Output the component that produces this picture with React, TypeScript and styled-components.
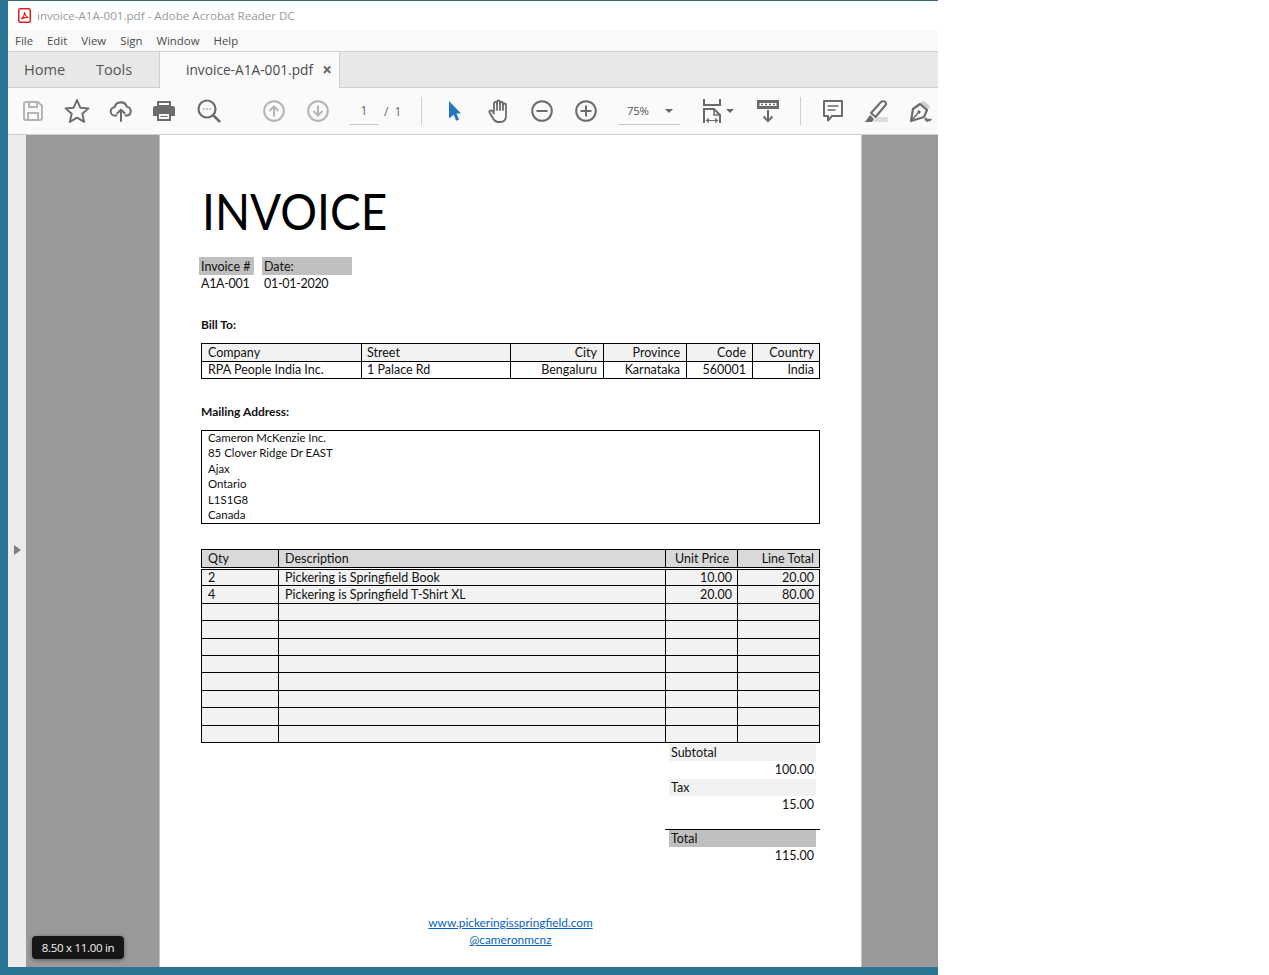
import React from "react";
import styled, { createGlobalStyle } from "styled-components";

const GlobalStyle = createGlobalStyle`
  html, body {
    margin: 0;
    padding: 0;
    background: #fff;
    overflow: hidden;
  }
  * { box-sizing: border-box; }
`;

const uiFont = `"Open Sans", "Noto Sans", sans-serif`;
const docFont = `"Lato", "Open Sans", sans-serif`;

const Desktop = styled.div`
  width: 938px;
  height: 975px;
  padding: 0 0 8px 8px;
  background: #2b7594;
  border-top: 1px solid #3a6b7d;
`;

const AppWindow = styled.div`
  height: 100%;
  display: flex;
  flex-direction: column;
  background: #fff;
  font-family: ${uiFont};
  overflow: hidden;
`;

const TitleBar = styled.div`
  height: 30px;
  flex: none;
  display: flex;
  align-items: center;
  gap: 6px;
  padding: 0 0 2px 10px;
  background: #fff;
  color: #999;
  font-size: 11.6px;
`;

const MenuBar = styled.div`
  height: 21px;
  flex: none;
  display: flex;
  align-items: center;
  gap: 14px;
  padding: 0 0 2px 7px;
  background: #f9f9f9;
  border-bottom: 1px solid #cfcfcf;
  color: #4b4b4b;
  font-size: 11.4px;
`;

const TabBar = styled.div`
  height: 36px;
  flex: none;
  display: flex;
  background: #e8e8e8;
  border-bottom: 1px solid #cfcfcf;
`;

const NavTab = styled.div<{ $w: number }>`
  display: flex;
  align-items: center;
  padding: 0 0 2px 16px;
  width: ${(p) => p.$w}px;
  font-size: 14.6px;
  color: #555;
`;

const DocTab = styled.div`
  width: 181px;
  height: 36px;
  display: flex;
  align-items: center;
  justify-content: space-between;
  padding: 0 7px 1px 26px;
  background: #fafafa;
  border-left: 1px solid #cfcfcf;
  border-right: 1px solid #cfcfcf;
  color: #4b4b4b;
  font-size: 13.7px;
`;

const Close = styled.span`
  font-size: 17px;
  line-height: 17px;
  font-weight: 700;
  color: #666;
`;

const Toolbar = styled.div`
  height: 47px;
  flex: none;
  display: flex;
  align-items: center;
  padding-left: 3px;
  background: #fafafa;
  border-bottom: 1px solid #cfcfcf;
`;

const Tool = styled.div<{ $ml?: number }>`
  width: 44px;
  height: 32px;
  margin-left: ${(p) => p.$ml ?? 0}px;
  display: flex;
  align-items: center;
  justify-content: center;
  flex: none;
`;

const Sep = styled.div<{ $ml: number }>`
  width: 1px;
  height: 28px;
  margin-left: ${(p) => p.$ml}px;
  background: #cfcfcf;
  flex: none;
`;

const PageField = styled.div`
  width: 28px;
  height: 28px;
  margin-left: 10px;
  flex: none;
  display: flex;
  align-items: center;
  justify-content: center;
  border-bottom: 1px solid #c8c8c8;
  color: #666;
  font-size: 12px;
`;

const PageCount = styled.div`
  margin-left: 6px;
  width: 28px;
  flex: none;
  color: #666;
  font-size: 12px;
  word-spacing: 3px;
`;

const ZoomField = styled.div`
  width: 62px;
  height: 28px;
  margin-left: 10px;
  flex: none;
  display: flex;
  align-items: center;
  justify-content: space-between;
  padding: 0 7px 0 9px;
  border-bottom: 1px solid #c8c8c8;
  color: #555;
  font-size: 11.4px;
  letter-spacing: -0.3px;
`;

const Caret = styled.span<{ $ml?: number }>`
  width: 0;
  height: 0;
  margin-left: ${(p) => p.$ml ?? 0}px;
  flex: none;
  border-left: 4px solid transparent;
  border-right: 4px solid transparent;
  border-top: 4px solid #666;
`;

const Workspace = styled.div`
  flex: 1;
  min-height: 0;
  display: flex;
  background: #9a9a9a;
  position: relative;
`;

const Rail = styled.div`
  width: 18px;
  flex: none;
  display: flex;
  align-items: center;
  padding: 0 0 2px 6px;
  background: #ececec;
`;

const RailArrow = styled.span`
  width: 0;
  height: 0;
  border-top: 5px solid transparent;
  border-bottom: 5px solid transparent;
  border-left: 7px solid #808080;
`;

const Sheet = styled.div`
  width: 703px;
  flex: none;
  margin-left: 133px;
  padding: 0 41px;
  background: #fff;
  border-left: 1px solid #c4c4c4;
  border-right: 1px solid #c4c4c4;
  overflow: hidden;
  font-family: ${docFont};
  color: #111;
  font-size: 12.5px;
`;

const Heading = styled.h1`
  margin: 43px 0 0 1px;
  font-size: 50px;
  line-height: 66px;
  font-weight: 400;
  color: #000;
  transform: scaleX(0.92);
  transform-origin: left center;
`;

const MetaGrid = styled.div`
  display: grid;
  grid-template-columns: 55px 90px;
  column-gap: 8px;
  margin: 13px 0 0 -2px;
  line-height: 17px;
`;

const MetaHead = styled.div`
  height: 18px;
  padding: 1px 0 0 2px;
  background: #bfbfbf;
`;

const MetaValue = styled.div`
  padding-left: 2px;
  letter-spacing: -0.3px;
`;

const Label = styled.div<{ $mt: number }>`
  margin-top: ${(p) => p.$mt}px;
  line-height: 16px;
  font-size: 12px;
  font-weight: 700;
`;

const Table = styled.table<{ $mt: number }>`
  width: 618px;
  margin-top: ${(p) => p.$mt}px;
  table-layout: fixed;
  border-collapse: collapse;
  border: 1px solid #000;
`;

const Cell = styled.td<{ $right?: boolean; $bg?: string; $pl?: number; $pr?: number; $h?: number }>`
  height: ${(p) => p.$h ?? 17.5}px;
  padding: 1px ${(p) => p.$pr ?? 5}px 0 ${(p) => p.$pl ?? 6}px;
  border: 1px solid #000;
  background: ${(p) => p.$bg ?? "transparent"};
  text-align: ${(p) => (p.$right ? "right" : "left")};
  line-height: 14px;
  white-space: nowrap;
  overflow: hidden;
`;

const HeadCell = styled(Cell)`
  height: 19px;
  border-bottom: 3px double #000;
`;

const AddressBox = styled.div`
  width: 619px;
  height: 94px;
  margin-top: 10px;
  padding-left: 6px;
  border: 1px solid #000;
  font-size: 11.4px;
  line-height: 15.45px;
`;

const AddressLines = styled.div`
  margin-top: -1px;
`;

const Totals = styled.div`
  width: 155px;
  margin: 1px 0 0 464px;
`;

const TotalLabel = styled.div<{ $bg: string }>`
  height: 17px;
  margin: 0 4px;
  padding-left: 2px;
  background: ${(p) => p.$bg};
  line-height: 18px;
`;

const TotalValue = styled.div`
  height: 18px;
  padding-right: 6px;
  text-align: right;
  line-height: 18px;
`;

const Rule = styled.div`
  margin-top: 15px;
  border-top: 1px solid #000;
`;

const Footer = styled.div`
  margin-top: 49px;
  text-align: center;
  font-size: 11.85px;
  line-height: 17px;
`;

const FooterLink = styled.a`
  display: block;
  color: #0563c1;
  text-decoration: underline;
`;

const SizeBadge = styled.div`
  position: absolute;
  left: 24px;
  bottom: 8px;
  width: 92px;
  height: 23px;
  display: flex;
  align-items: center;
  justify-content: center;
  border-radius: 4px;
  background: #171717;
  box-shadow: 0 1px 4px rgba(0, 0, 0, 0.4);
  color: #f4f4f4;
  font-family: ${uiFont};
  font-size: 11.5px;
  letter-spacing: -0.3px;
`;

const Icon = styled.svg.attrs({ xmlns: "http://www.w3.org/2000/svg", fill: "none" })`
  display: block;
  overflow: visible;
`;

const grey = "#6b6b6b";
const light = "#b4b4b4";

const PdfLogo = () => (
  <Icon width="13" height="15" viewBox="0 0 13 15">
    <rect x="0.75" y="0.75" width="11.5" height="13.5" rx="1.5" stroke="#e0201b" strokeWidth="1.5" />
    <path d="M3 11c2-1 3.5-3.5 3.5-7 .5 3 1.5 5 4 5.500-3-.5-5 0-7.500 1.500z" stroke="#e0201b" strokeWidth="1.1" />
  </Icon>
);

const SaveIcon = () => (
  <Icon width="20" height="20" viewBox="0 0 20 20" stroke={light} strokeWidth="2">
    <path d="M1 3a2 2 0 0 1 2-2h12l4 4v12a2 2 0 0 1-2 2H3a2 2 0 0 1-2-2z" />
    <path d="M6 1v5h8V1M5 19v-7h10v7" />
  </Icon>
);

const StarIcon = () => (
  <Icon width="26" height="26" viewBox="0 0 26 26" stroke={grey} strokeWidth="1.9" strokeLinejoin="round">
    <path d="M13 2l3.300 7.700 8.200.7-6.200 5.400 1.900 8.100L13 19.600l-7.200 4.300 1.900-8.100-6.200-5.400 8.200-.7z" />
  </Icon>
);

const CloudIcon = () => (
  <Icon width="22" height="22" viewBox="0 0 24 24" stroke={grey} strokeWidth="2.200" strokeLinecap="round" strokeLinejoin="round">
    <path d="M7 17H5.500a4.500 4.500 0 0 1-.5-9A7 7 0 0 1 18.500 7.500 4.800 4.800 0 0 1 18.500 17H17" />
    <path d="M12 23V11M8 14.500L12 10.500l4 4" />
  </Icon>
);

const PrintIcon = () => (
  <Icon width="22" height="20" viewBox="1 0 22 20">
    <path d="M5 1h12v4H5z" stroke={grey} strokeWidth="2" />
    <path d="M2 5h18a2 2 0 0 1 2 2v8h-4v-4H4v4H0V7a2 2 0 0 1 2-2z" fill={grey} />
    <path d="M5 12h12v7H5z" stroke={grey} strokeWidth="2" />
    <path d="M7.500 15.500h7" stroke={grey} />
  </Icon>
);

const SearchIcon = () => (
  <Icon width="24" height="24" viewBox="0 0 24 24" stroke={grey}>
    <circle cx="10" cy="10" r="8.500" strokeWidth="2.200" />
    <path d="M16 16l7 7" strokeWidth="2.500" />
    <path d="M6.500 10h1M9.500 10h1M12.500 10h1" strokeWidth="1.500" />
  </Icon>
);

const ArrowCircle = ({ down }: { down?: boolean }) => (
  <Icon width="22" height="22" viewBox="0 0 22 22" stroke={light} strokeWidth="2">
    <circle cx="11" cy="11" r="9.800" />
    <path d={down ? "M11 5.500v10M6.500 11l4.500 4.500 4.500-4.500" : "M11 16.500v-10M6.500 11L11 6.500l4.500 4.500"} />
  </Icon>
);

const CursorIcon = () => (
  <Icon width="14" height="20" viewBox="-1 0 14 20">
    <path d="M1 0l12 12.500H8.500l2.500 6-2.800 1.200-2.400-6L1 17.500z" fill="#2474c4" />
  </Icon>
);

const HandIcon = () => (
  <Icon width="22" height="24" viewBox="-1 0 22 24" stroke={grey} strokeWidth="1.800" strokeLinecap="round" strokeLinejoin="round">
    <path d="M6 12V4.500a1.500 1.500 0 0 1 3 0V3a1.500 1.500 0 0 1 3 0v1.500a1.500 1.500 0 0 1 3 0V6a1.500 1.500 0 0 1 3 0v11c0 4-2.500 6-6 6H10c-3 0-4-2-5.500-4.500L1.500 13.500c-.8-1.500 1.500-3 2.700-1.500L6 14.500" />
    <path d="M9 4.500V11M12 3v8M15 4.500V11" />
  </Icon>
);

const ZoomCircle = ({ plus }: { plus?: boolean }) => (
  <Icon width="22" height="22" viewBox="0 0 22 22" stroke={grey} strokeWidth="2">
    <circle cx="11" cy="11" r="9.800" />
    <path d={plus ? "M5.500 11h11M11 5.500v11" : "M5.500 11h11"} />
  </Icon>
);

const FitIcon = () => (
  <Icon width="18" height="25" viewBox="0 0 18 25" stroke={grey} strokeWidth="2">
    <path d="M1 0v6h16V0" />
    <path d="M1 24V10h10l6 6v8" />
    <path d="M11 10v6h6" strokeWidth="1.500" />
    <path d="M3.500 21.500h11M6 19.500l-2.500 2 2.500 2M12 19.500l2.500 2-2.500 2" strokeWidth="1.200" />
  </Icon>
);

const ReadIcon = () => (
  <Icon width="22" height="22" viewBox="0 0 22 22">
    <path d="M0 0h22v9H0z" fill={grey} />
    <path d="M2.500 3h17v3h-17z" fill="#fff" />
    <path d="M4 4.500h2M8 4.500h2M12 4.500h2M16 4.500h2" stroke={grey} strokeWidth="1.500" />
    <path d="M11 10v11M6.500 16.500L11 21l4.500-4.500" stroke={grey} strokeWidth="2" />
  </Icon>
);

const CommentIcon = () => (
  <Icon width="20" height="22" viewBox="0 0 20 22">
    <path d="M1 1h18v15H9l-4 4.500V16H1z" stroke={grey} strokeWidth="2" strokeLinejoin="round" />
    <path d="M4.500 6h11M4.500 10h8" stroke={grey} strokeWidth="1.500" />
  </Icon>
);

const HighlightIcon = () => (
  <Icon width="24" height="24" viewBox="0 0 24 24">
    <path d="M8 23h15v-5H11z" fill="#dcdcdc" />
    <path d="M6 14L16 3c1.500-1.500 5.500-1 5 2.500L10.500 18z" stroke={grey} strokeWidth="2" strokeLinejoin="round" />
    <path d="M5 16l4 4-2 3H0z" fill={grey} />
  </Icon>
);

const SignIcon = () => (
  <Icon width="24" height="24" viewBox="0 0 24 24">
    <path d="M13 3l7 6" stroke="#cfcfcf" strokeWidth="4" />
    <path d="M11 5l7 6-3 7-13 4 2-12z" stroke={grey} strokeWidth="2.200" strokeLinejoin="round" />
    <path d="M3 21l6-7" stroke={grey} strokeWidth="1.500" />
    <circle cx="10" cy="13" r="1.700" fill={grey} />
    <path d="M16 21.500c1-2.500 2-2.500 2 0s1.500-2.500 2-.5 1.500-1.500 2.500-.5" stroke={grey} strokeWidth="1.600" />
  </Icon>
);

const billColumns = [160, 149, 93, 83, 66, 67];
const itemColumns = [77, 387, 72, 82];

const items: [string, string, string, string][] = [
  ["2", "Pickering is Springfield Book", "10.00", "20.00"],
  ["4", "Pickering is Springfield T-Shirt XL", "20.00", "80.00"],
  ...Array.from({ length: 8 }, () => ["", "", "", ""] as [string, string, string, string]),
];

const address = ["Cameron McKenzie Inc.", "85 Clover Ridge Dr EAST", "Ajax", "Ontario", "L1S1G8", "Canada"];

const App = () => {
  return (
    <Desktop>
      <GlobalStyle />
      <AppWindow>
        <TitleBar>
          <PdfLogo />
          invoice-A1A-001.pdf - Adobe Acrobat Reader DC
        </TitleBar>
        <MenuBar>
          <span>File</span>
          <span>Edit</span>
          <span>View</span>
          <span>Sign</span>
          <span>Window</span>
          <span>Help</span>
        </MenuBar>
        <TabBar>
          <NavTab $w={72}>Home</NavTab>
          <NavTab $w={79}>Tools</NavTab>
          <DocTab>
            invoice-A1A-001.pdf
            <Close>×</Close>
          </DocTab>
        </TabBar>
        <Toolbar>
          <Tool><SaveIcon /></Tool>
          <Tool><StarIcon /></Tool>
          <Tool><CloudIcon /></Tool>
          <Tool><PrintIcon /></Tool>
          <Tool><SearchIcon /></Tool>
          <Tool $ml={21}><ArrowCircle /></Tool>
          <Tool><ArrowCircle down /></Tool>
          <PageField>1</PageField>
          <PageCount>/ 1</PageCount>
          <Sep $ml={9} />
          <Tool $ml={10}><CursorIcon /></Tool>
          <Tool><HandIcon /></Tool>
          <Tool><ZoomCircle /></Tool>
          <Tool><ZoomCircle plus /></Tool>
          <ZoomField>
            75%
            <Caret />
          </ZoomField>
          <Tool $ml={10}><FitIcon /></Tool>
          <Caret $ml={-8} />
          <Tool $ml={12}><ReadIcon /></Tool>
          <Sep $ml={10} />
          <Tool $ml={10}><CommentIcon /></Tool>
          <Tool><HighlightIcon /></Tool>
          <Tool><SignIcon /></Tool>
        </Toolbar>
        <Workspace>
          <Rail>
            <RailArrow />
          </Rail>
          <Sheet>
            <Heading>INVOICE</Heading>
            <MetaGrid>
              <MetaHead>Invoice #</MetaHead>
              <MetaHead>Date:</MetaHead>
              <MetaValue>A1A-001</MetaValue>
              <MetaValue>01-01-2020</MetaValue>
            </MetaGrid>
            <Label $mt={25}>Bill To:</Label>
            <Table $mt={10}>
              <colgroup>
                {billColumns.map((w, i) => <col key={i} width={w} />)}
              </colgroup>
              <tbody>
                <tr>
                  <Cell $bg="#f2f2f2">Company</Cell>
                  <Cell $bg="#f2f2f2" $pl={5}>Street</Cell>
                  <Cell $bg="#f2f2f2" $right $pr={6}>City</Cell>
                  <Cell $bg="#f2f2f2" $right $pr={6}>Province</Cell>
                  <Cell $bg="#f2f2f2" $right $pr={6}>Code</Cell>
                  <Cell $bg="#f2f2f2" $right>Country</Cell>
                </tr>
                <tr>
                  <Cell>RPA People India Inc.</Cell>
                  <Cell $pl={5}>1 Palace Rd</Cell>
                  <Cell $right $pr={6}>Bengaluru</Cell>
                  <Cell $right $pr={6}>Karnataka</Cell>
                  <Cell $right $pr={6}>560001</Cell>
                  <Cell $right>India</Cell>
                </tr>
              </tbody>
            </Table>
            <Label $mt={25}>Mailing Address:</Label>
            <AddressBox>
              <AddressLines>
                {address.map((line) => <div key={line}>{line}</div>)}
              </AddressLines>
            </AddressBox>
            <Table $mt={25}>
              <colgroup>
                {itemColumns.map((w, i) => <col key={i} width={w} />)}
              </colgroup>
              <tbody>
                <tr>
                  <HeadCell $bg="#d9d9d9">Qty</HeadCell>
                  <HeadCell $bg="#d9d9d9">Description</HeadCell>
                  <HeadCell $bg="#d9d9d9" $right $pr={8}>Unit Price</HeadCell>
                  <HeadCell $bg="#d9d9d9" $right>Line Total</HeadCell>
                </tr>
                {items.map((row, i) => (
                  <tr key={i}>
                    <Cell $bg="#f2f2f2" $h={17.4}>{row[0]}</Cell>
                    <Cell $bg="#f2f2f2" $h={17.4}>{row[1]}</Cell>
                    <Cell $bg="#f2f2f2" $h={17.4} $right>{row[2]}</Cell>
                    <Cell $bg="#f2f2f2" $h={17.4} $right>{row[3]}</Cell>
                  </tr>
                ))}
              </tbody>
            </Table>
            <Totals>
              <TotalLabel $bg="#f2f2f2">Subtotal</TotalLabel>
              <TotalValue>100.00</TotalValue>
              <TotalLabel $bg="#f2f2f2">Tax</TotalLabel>
              <TotalValue>15.00</TotalValue>
              <Rule />
              <TotalLabel $bg="#bfbfbf">Total</TotalLabel>
              <TotalValue>115.00</TotalValue>
            </Totals>
            <Footer>
              <FooterLink href="#">www.pickeringisspringfield.com</FooterLink>
              <FooterLink href="#">@cameronmcnz</FooterLink>
            </Footer>
          </Sheet>
          <SizeBadge>8.50 x 11.00 in</SizeBadge>
        </Workspace>
      </AppWindow>
    </Desktop>
  );
};

export default App;
